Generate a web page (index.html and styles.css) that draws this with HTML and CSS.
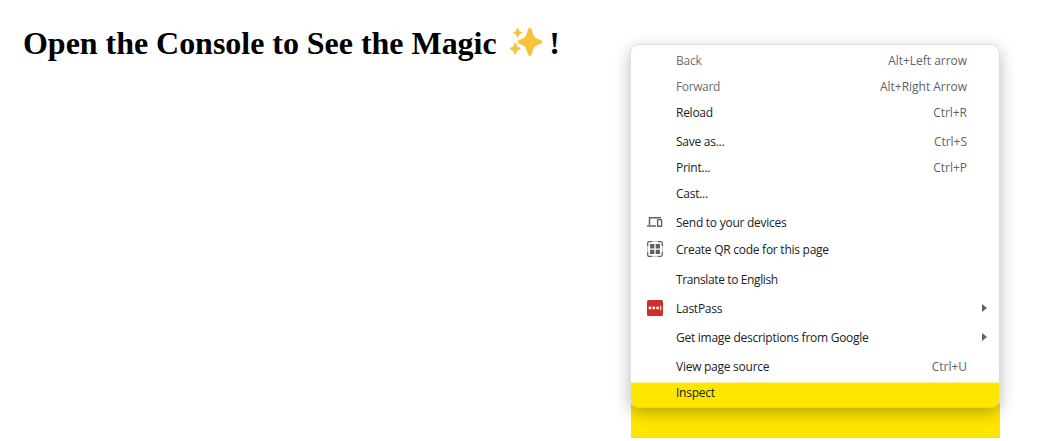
FILE: index.html
```html
<!DOCTYPE html>
<html lang="en">
<head>
<meta charset="utf-8">
<title>Open the Console</title>
<link rel="stylesheet" href="styles.css">
</head>
<body>
<main class="page">
  <h1 class="title"><span class="title-text">Open the Console to See the Magic</span><svg class="sparkles" viewBox="0 0 34 30" aria-hidden="true"><path d="M20.8 1c1.400 0 1.900 1.200 2.400 3 1.500 5.500 2.200 6.800 7.800 8.800 1.500.5 2.300 1 2.300 2.100s-.8 1.600-2.300 2.100c-5.600 2-6.300 3.300-7.800 8.800-.5 1.800-1 3.200-2.400 3.200s-1.900-1.400-2.400-3.200c-1.500-5.500-2.200-6.800-7.400-8.800-1.500-.5-2.300-1-2.300-2.100s.8-1.600 2.300-2.100c5.200-2 5.900-3.300 7.400-8.800.5-1.800 1-3 2.400-3z"/><path d="M8.600 1c.5 0 .7.400.9 1 .7 2 1.100 2.400 2.900 3 .7.200.9.500.9.800s-.2.600-.9.800c-1.800.6-2.200 1-2.900 3-.2.600-.4 1-.9 1s-.7-.4-.9-1c-.7-2-1.100-2.400-2.600-3-.7-.2-.9-.5-.9-.8s.2-.6.900-.8c1.500-.6 1.900-1 2.600-3 .2-.6.400-1 .9-1z"/><path d="M6.200 15.800c.6 0 .8.500 1 1.200.8 2.400 1.200 2.900 3.300 3.600.8.300 1 .7 1 1.100s-.2.800-1 1.100c-2.100.7-2.500 1.200-3.300 3.600-.2.700-.4 1.200-1 1.200s-.8-.5-1-1.200c-.8-2.400-1.200-2.900-3.300-3.600-.7-.3-.9-.7-.9-1.100s.2-.8.900-1.100c2.100-.7 2.500-1.200 3.300-3.600.2-.7.400-1.200 1-1.200z"/></svg><span>!</span></h1>
  <div class="menu-area">
    <div class="marker"></div>
    <div class="menu">
      <div class="group">
        <div class="item disabled"><span class="label">Back</span><span class="keys">Alt+Left arrow</span></div>
        <div class="item disabled"><span class="label tight">Forward</span><span class="keys">Alt+Right Arrow</span></div>
        <div class="item"><span class="label">Reload</span><span class="keys">Ctrl+R</span></div>
      </div>
      <div class="group">
        <div class="item"><span class="label">Save as...</span><span class="keys">Ctrl+S</span></div>
        <div class="item"><span class="label">Print...</span><span class="keys">Ctrl+P</span></div>
        <div class="item"><span class="label">Cast...</span></div>
      </div>
      <div class="group spaced">
        <div class="item"><svg class="icon" viewBox="0 0 16 16"><path d="M2.500 11V3.700H14M0 12h9" fill="none" stroke="#5f6368" stroke-width="1.500"/><rect x="10.600" y="5.600" width="4" height="6.600" rx=".3" fill="none" stroke="#5f6368" stroke-width="1.400"/></svg><span class="label">Send to your devices</span></div>
        <div class="item"><svg class="icon" viewBox="0 0 16 16"><path d="M.7 5V2.200Q.7.700 2.200.7H5M11 .7h2.800q1.500 0 1.500 1.500V5M15.300 11v2.800q0 1.500-1.500 1.500H11M5 15.300H2.200Q.7 15.300.7 13.800V11" fill="none" stroke="#5f6368" stroke-width="1.300"/><path d="M5 .6h6M5 15.400h6M.6 5v6M15.400 5v6" fill="none" stroke="#5f6368" stroke-opacity=".4"/><path d="M3 3h4.400v4.400H3zM8.700 3H13v4.400H8.700zM3 8.700h4.400V13H3zM8.700 8.700H13V13H8.700z" fill="#5f6368"/></svg><span class="label">Create QR code for this page</span></div>
      </div>
      <div class="group translate">
        <div class="item"><span class="label tight">Translate to English</span></div>
      </div>
      <div class="group">
        <div class="item"><svg class="icon" viewBox="0 0 16 16"><rect width="16" height="16" rx="1.500" fill="#d32d27"/><g fill="#fff"><circle cx="3" cy="8" r="1.400"/><circle cx="6.800" cy="8" r="1.400"/><circle cx="10.600" cy="8" r="1.400"/><path d="M13.200 5.500h1v5h-1z"/></g></svg><span class="label">LastPass</span><span class="arrow"></span></div>
      </div>
      <div class="group">
        <div class="item"><span class="label">Get image descriptions from Google</span><span class="arrow"></span></div>
      </div>
      <div class="group">
        <div class="item"><span class="label">View page source</span><span class="keys">Ctrl+U</span></div>
        <div class="item"><span class="label">Inspect</span></div>
      </div>
    </div>
  </div>
</main>
</body>
</html>
```
FILE: styles.css
```css
* { box-sizing: border-box; }
body { margin: 0; background: #fff; overflow: hidden; }
.page { display: flex; height: 441px; }
.title {
  display: flex;
  width: 630px;
  height: 36px;
  margin: 25px 0 0;
  padding-left: 23px;
  font: bold 32px/36px "Liberation Serif", "Times New Roman", serif;
  letter-spacing: -.03px;
  color: #000;
}
.title-text { white-space: nowrap; }
.sparkles { width: 34px; height: 30px; margin: 2px 6px 0 12.500px; fill: #f9c23c; flex: none; }
.menu-area { position: relative; width: 370px; height: 438px; padding-top: 44px; }
.marker { position: absolute; left: 1px; right: 0; bottom: 0; height: 55px; background: #ffe600; }
.menu {
  position: relative;
  height: 364px;
  padding-top: 3px;
  border: 1px solid #dadfe4;
  border-bottom-color: #e7df00;
  border-radius: 9px;
  background: linear-gradient(#fff 337px, #fff3a0 337px, #fff3a0 338px, #ffe600 338px);
  box-shadow: 0 5px 16px rgba(0, 0, 0, .27);
  font: 12px/26px "Open Sans", "Segoe UI", sans-serif;
  color: #202124;
}
.group { margin-bottom: 3px; }
.spaced .item + .item { margin-top: 1px; }
.translate { margin-top: 4px; }
.item { display: flex; position: relative; height: 26px; padding: 0 32px 0 45px; white-space: nowrap; }
.label { letter-spacing: -.26px; }
.tight { letter-spacing: -.38px; }
.keys { margin-left: auto; letter-spacing: -.03px; color: #5f6368; }
.disabled { color: #6b6e73; }
.icon { position: absolute; left: 16px; top: 4px; width: 16px; height: 16px; }
.arrow { position: absolute; right: 12px; top: 8px; border: 4px solid transparent; border-left: 5px solid #5f6368; border-right: 0; }
```
